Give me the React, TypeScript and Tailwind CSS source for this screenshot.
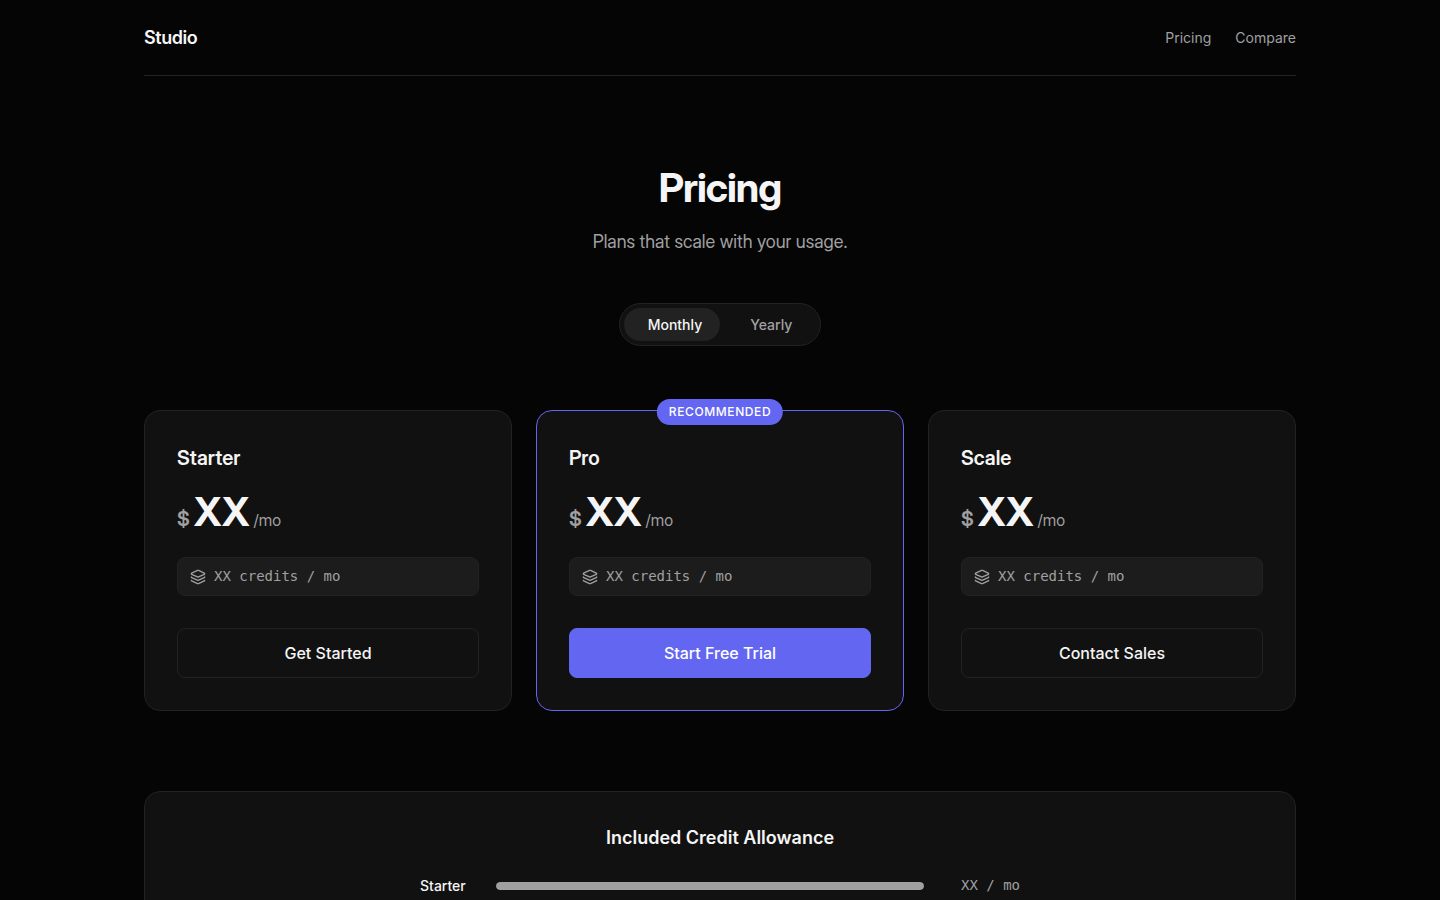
import { useState } from "react";
import { Layers } from "lucide-react";

interface Plan {
  name: string;
  price: string;
  credits: string;
  cta: string;
  recommended?: boolean;
}

const plans: Plan[] = [
  { name: "Starter", price: "XX", credits: "XX credits / mo", cta: "Get Started" },
  { name: "Pro", price: "XX", credits: "XX credits / mo", cta: "Start Free Trial", recommended: true },
  { name: "Scale", price: "XX", credits: "XX credits / mo", cta: "Contact Sales" },
];

const allowances = [{ name: "Starter", value: "XX / mo", percent: 100 }];

const Header = () => (
  <header className="flex items-center justify-between border-b border-[#222222] py-6">
    <a href="#" className="text-lg leading-[27px] font-semibold tracking-tight">
      Studio
    </a>
    <nav className="flex items-center gap-6 text-sm text-[#a0a0a0]">
      <a href="#pricing" className="hover:text-white transition-colors">
        Pricing
      </a>
      <a href="#compare" className="hover:text-white transition-colors">
        Compare
      </a>
    </nav>
  </header>
);

const BillingToggle = () => {
  const [yearly, setYearly] = useState(false);

  return (
    <div className="relative flex rounded-full border border-[#222222] bg-[#111111] p-1 text-sm leading-[17px] font-medium">
      {/* Sliding indicator behind the labels */}
      <div
        className={`absolute inset-y-1 left-1 w-[calc(50%-4px)] rounded-full bg-[#222222] transition-transform duration-300 ${
          yearly ? "translate-x-full" : ""
        }`}
      />
      <button
        type="button"
        aria-pressed={!yearly}
        onClick={() => setYearly(false)}
        className={`relative px-6 py-2 ${yearly ? "text-[#a0a0a0]" : "text-[#f5f5f5]"}`}
      >
        Monthly
      </button>
      <button
        type="button"
        aria-pressed={yearly}
        onClick={() => setYearly(true)}
        className={`relative px-6 py-2 ${yearly ? "text-[#f5f5f5]" : "text-[#a0a0a0]"}`}
      >
        Yearly
      </button>
    </div>
  );
};

const PlanCard = ({ plan }: { plan: Plan }) => (
  <article
    className={`relative flex flex-col rounded-2xl border bg-[#111111] p-8 ${
      plan.recommended ? "border-[#6366f1]" : "border-[#222222]"
    }`}
  >
    {plan.recommended && (
      <span className="absolute -top-3 left-1/2 -translate-x-1/2 rounded-full bg-[#6366f1] px-3 py-1 text-xs leading-[18px] font-medium tracking-wider text-white">
        RECOMMENDED
      </span>
    )}
    <h2 className="font-['Inter_Display',Inter,sans-serif] text-xl leading-[30px] font-semibold">{plan.name}</h2>
    <p className="mt-4 flex items-baseline gap-1 font-['Inter_Display',Inter,sans-serif]">
      <span className="text-xl leading-none font-semibold text-[#a0a0a0]">$</span>
      <span className="text-[40px] leading-[46px] font-bold">{plan.price}</span>
      <span className="text-base leading-none text-[#a0a0a0]">/mo</span>
    </p>
    <p className="mt-[22px] flex items-center gap-2 rounded-lg border border-[#222222] bg-[#1c1c1c] px-3 py-2 font-['DejaVu_Sans_Mono',monospace] text-sm leading-[21px] text-[#a0a0a0]">
      <Layers size={16} strokeWidth={2} aria-hidden="true" />
      {plan.credits}
    </p>
    <button
      type="button"
      className={`mt-8 rounded-lg border py-3 text-base font-medium transition-colors ${
        plan.recommended
          ? "border-[#6366f1] bg-[#6366f1] text-white hover:bg-[#5558e6]"
          : "border-[#222222] text-[#f5f5f5] hover:bg-[#1c1c1c]"
      }`}
    >
      {plan.cta}
    </button>
  </article>
);

const App = () => {
  return (
    <div className="min-h-screen bg-[#050505] font-[Inter,sans-serif] text-[#f5f5f5]">
      <div className="mx-auto max-w-[1200px] px-6">
        <Header />

        <main>
          <section id="pricing" className="flex flex-col items-center pt-20 pb-16 text-center">
            <h1 className="font-['Inter_Display',Inter,sans-serif] text-[40px] leading-[64px] font-bold tracking-tight">
              Pricing
            </h1>
            <p className="mt-2 font-['Inter_Display',Inter,sans-serif] text-lg leading-[27px] text-[#a0a0a0]">
              Plans that scale with your usage.
            </p>
            <div className="mt-12">
              <BillingToggle />
            </div>
          </section>

          <section className="grid gap-6 md:grid-cols-3">
            {plans.map((plan) => (
              <PlanCard key={plan.name} plan={plan} />
            ))}
          </section>

          <section id="compare" className="mt-20 rounded-2xl border border-[#222222] bg-[#111111] p-8">
            <h2 className="text-center text-lg leading-[27px] font-semibold">Included Credit Allowance</h2>
            <div className="mx-auto mt-6 flex max-w-[600px] flex-col gap-4">
              {allowances.map((row) => (
                <div key={row.name} className="grid grid-cols-[60px_1fr_80px] items-center gap-4 text-sm leading-[21px]">
                  <span className="font-medium">{row.name}</span>
                  <div className="h-2 overflow-hidden rounded-full bg-[#222222]">
                    <div className="h-full rounded-full bg-[#a0a0a0]" style={{ width: `${row.percent}%` }} />
                  </div>
                  <span className="text-right font-['DejaVu_Sans_Mono',monospace] text-[#a0a0a0]">{row.value}</span>
                </div>
              ))}
            </div>
          </section>
        </main>
      </div>
    </div>
  );
};

export default App;
